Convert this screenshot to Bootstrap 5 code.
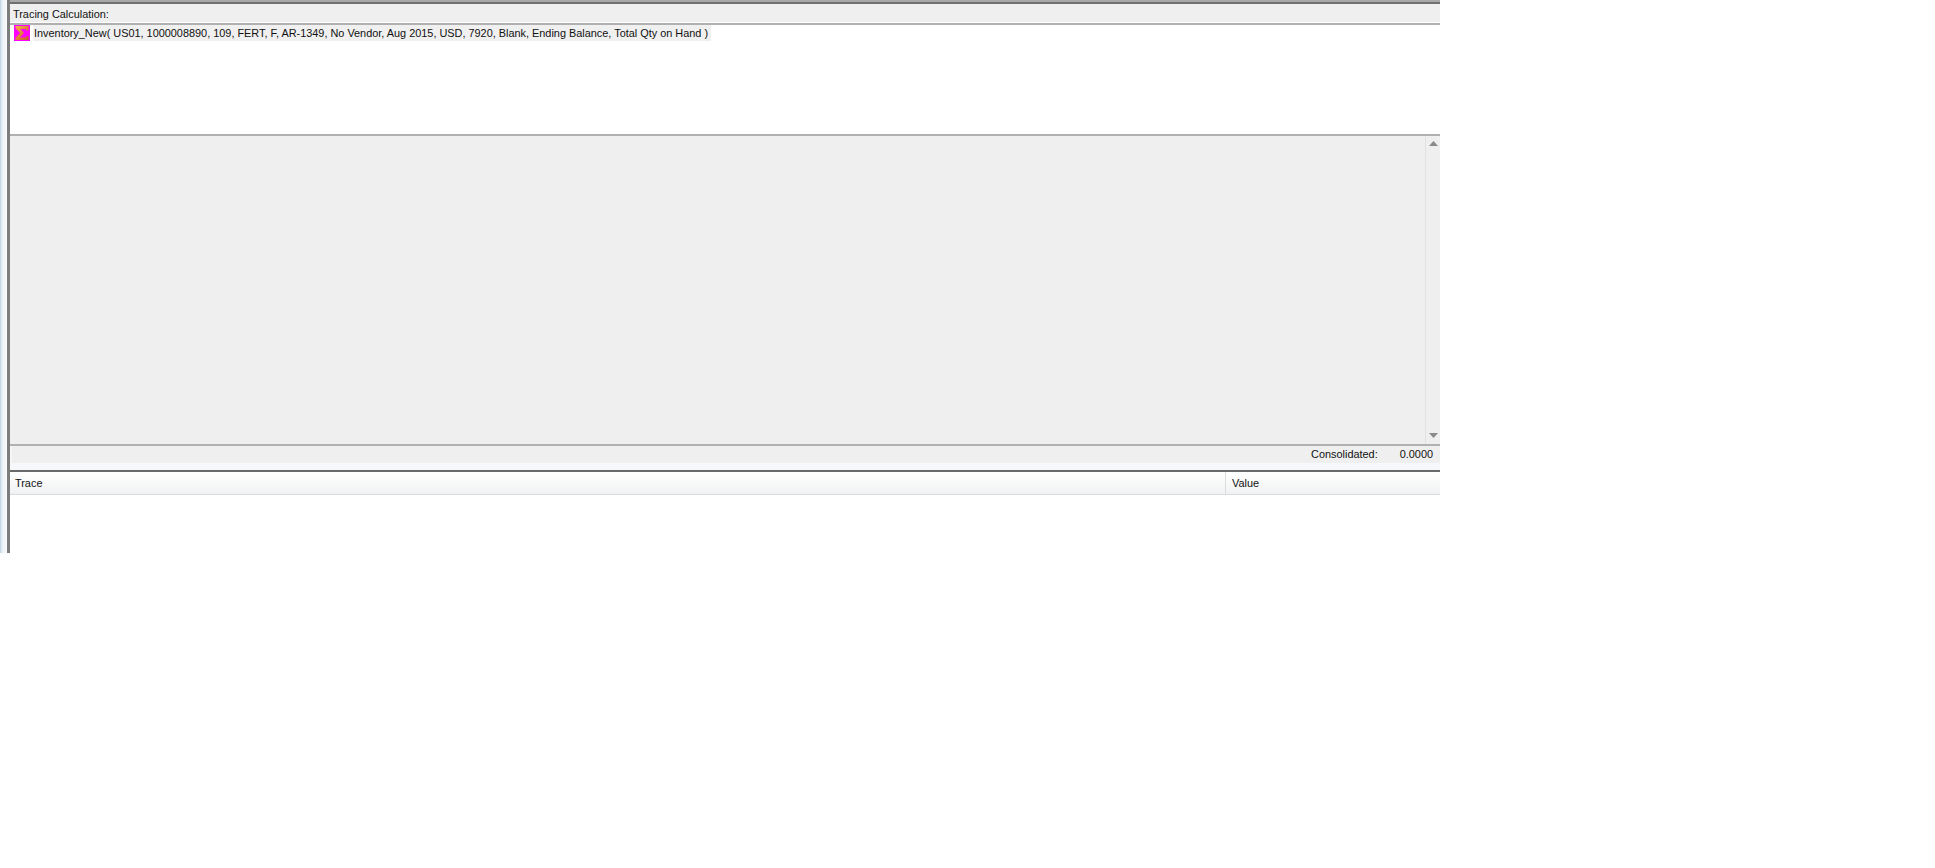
<!DOCTYPE html>
<html lang="en">
<head>
  <meta charset="UTF-8">
  <title>Tracing Calculation</title>
  <link href="https://cdn.jsdelivr.net/npm/bootstrap@5.3.3/dist/css/bootstrap.min.css" rel="stylesheet">
  <style>
    body {
      background: #fff;
      color: #111;
      font-family: "Liberation Sans", Arial, sans-serif;
      font-size: 10.9px;
      line-height: 1;
    }
    .trace-window {
      width: 1440px;
      height: 553px;
      background: linear-gradient(90deg, #b9d0e0 0, #e9f0f6 2px, #fafbfd 7px);
      padding-left: 7px;
    }
    .trace-frame {
      height: 100%;
      border-left: 3px solid #7d7d7d;
      background: #f6f8fb;
    }
    .title-band {
      height: 25px;
      border-top: 2px solid #a8a8a8;
      border-bottom: 2px solid #b0b0b0;
      background: #efefef;
      box-shadow: inset 0 2px 0 #707070, inset 0 -1px 0 #fff;
      padding-left: 3px;
      padding-top: 3px;
    }
    .tree-pane {
      height: 111px;
      background: #fff;
      border-bottom: 2px solid #b0b0b0;
      padding-left: 4px;
    }
    .tree-node {
      width: fit-content;
    }
    .tree-label {
      height: 16px;
      margin-left: 3px;
      padding: 0 3px 0 1px;
      background: #f0f0f0;
    }
    .grid-pane {
      height: 310px;
      background: #efefef;
      border-bottom: 2px solid #b0b0b0;
    }
    .grid-scroll {
      width: 15px;
      border-left: 1px solid #e2e2e2;
      padding: 5px 0 6px;
    }
    .status-band {
      height: 17px;
      background: #efefef;
      border-left: 2px solid #f6f6f6;
      padding-right: 7px;
      gap: 22px;
    }
    .status-gap {
      height: 7px;
    }
    .trace-pane {
      height: 83px;
      background: #fff;
      border-top: 2px solid #696969;
    }
    .trace-head {
      height: 23px;
      background: linear-gradient(#fff, #f1f2f4);
      border-bottom: 1px solid #dcdcdc;
    }
    .head-trace {
      width: 1216px;
      height: 100%;
      padding-left: 5px;
      border-right: 1px solid #dcdcdc;
    }
    .head-value {
      padding-left: 6px;
    }
  </style>
</head>
<body class="m-0">

<div class="trace-window">
  <div class="trace-frame d-flex flex-column">
    <!-- header -->
    <div class="title-band d-flex align-items-center">Tracing Calculation:</div>

    <!-- tree -->
    <div class="tree-pane">
      <div class="tree-node d-flex align-items-center">
        <svg width="16" height="16" viewBox="0 0 16 16">
          <defs>
            <linearGradient id="sigmaFill" x1="0" y1="0" x2="1" y2="1">
              <stop offset="0" stop-color="#f6b04a"/>
              <stop offset="1" stop-color="#c8562a"/>
            </linearGradient>
          </defs>
          <rect width="16" height="16" fill="#f0f"/>
          <path d="M1.500 1h13v4.500h-2L12 4H6.500l3.500 4-4 4.500H12l.5-1.500h2v4h-13v-2L6 8 1.500 3z" fill="url(#sigmaFill)"/>
        </svg>
        <div class="tree-label d-flex align-items-center">Inventory_New( US01, 1000008890, 109, FERT, F, AR-1349, No Vendor, Aug 2015, USD, 7920, Blank, Ending Balance, Total Qty on Hand )</div>
      </div>
    </div>

    <!-- empty grid -->
    <div class="grid-pane d-flex justify-content-end">
      <div class="grid-scroll d-flex flex-column justify-content-between align-items-center">
        <svg width="9" height="5" viewBox="0 0 9 5"><path d="M4.500 0 9 5H0z" fill="#8a8a8a"/></svg>
        <svg width="9" height="5" viewBox="0 0 9 5"><path d="M0 0h9L4.500 5z" fill="#8a8a8a"/></svg>
      </div>
    </div>

    <!-- consolidated -->
    <div class="status-band d-flex align-items-center justify-content-end">
      <span>Consolidated:</span>
      <span>0.0000</span>
    </div>
    <div class="status-gap"></div>

    <!-- trace table -->
    <div class="trace-pane">
      <div class="trace-head d-flex align-items-center">
        <div class="head-trace d-flex align-items-center">Trace</div>
        <div class="head-value">Value</div>
      </div>
    </div>
  </div>
</div>

<script src="https://cdn.jsdelivr.net/npm/bootstrap@5.3.3/dist/js/bootstrap.bundle.min.js"></script>
</body>
</html>
